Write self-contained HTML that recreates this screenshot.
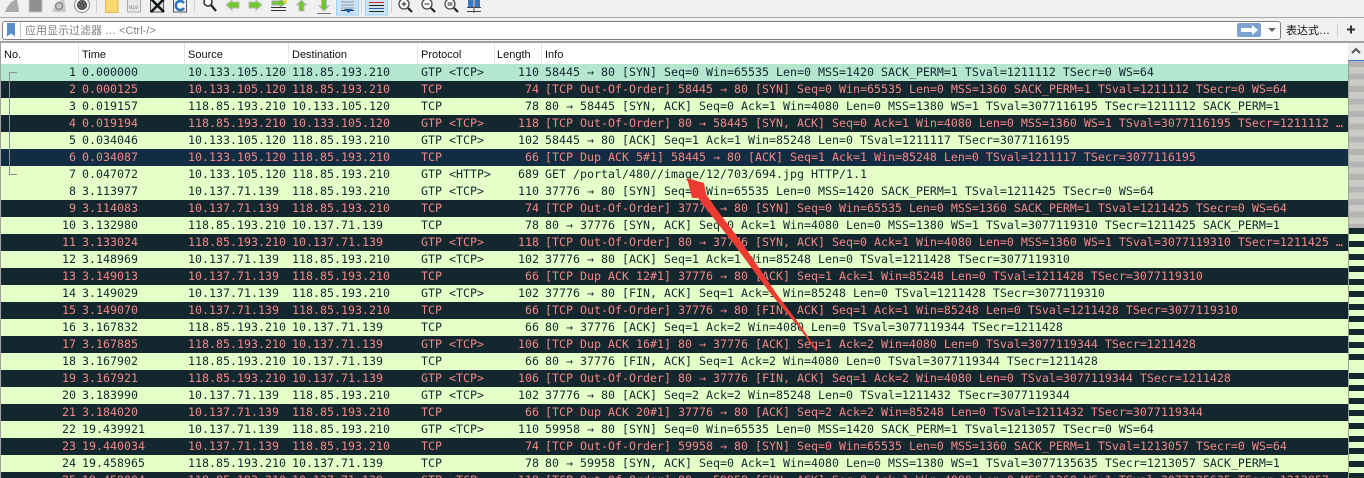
<!DOCTYPE html>
<html><head><meta charset="utf-8"><style>
html,body{margin:0;padding:0;width:1364px;height:478px;overflow:hidden;background:#f0f0f0}
body{position:relative;font-family:"Liberation Sans","Noto Sans CJK SC",sans-serif}
.abs{position:absolute}
#tb{position:absolute;left:0;top:0;width:1364px;height:18px;overflow:hidden}
#fbar{position:absolute;left:2px;top:21px;width:1277px;height:17px;background:#fff;border:1px solid #7d7d7d;border-radius:3px}
#hdr{position:absolute;left:1px;top:43px;width:1347px;height:21px;background:#fff;font-size:11px;color:#111}
#hdr span{position:absolute;top:6px;line-height:13px}
#hdr i{position:absolute;top:0;width:1px;height:21px;background:#e6e6e6}
#rows{position:absolute;left:1px;top:64px;width:1347px;height:414px;overflow:hidden;font-family:"DejaVu Sans Mono","Liberation Mono",monospace;font-size:11.63px;line-height:17px}
.r{position:absolute;left:0;width:1347px;height:17px;background:#e4ffc7;color:#12272e;white-space:pre}
.r span{position:absolute;top:0}
.k{background:#12272e;color:#f78787}
.b{background:#122d41;color:#f78787}
.g{background:#b5e6d0;color:#12272e}
.n{right:1272px}
.t{left:81px}
.s{left:187px}
.d{left:291px}
.p{left:420px}
.l{right:809px}
.i{left:544px}
</style></head><body>
<div id="tb">
<svg width="1364" height="18" viewBox="0 0 1364 18" style="position:absolute;left:0;top:0">
<path d="M5 12 C7 6 11 1 17 -1 L19 12Z" fill="#a9a9a9"/>
<rect x="29" y="-2" width="13" height="14" fill="#8f8f8f" stroke="#c4c4c4"/>
<path d="M52 12 C54 6 58 1 64 -1 L66 12Z" fill="#c9c9c9"/><circle cx="59" cy="6" r="3.5" fill="none" stroke="#8e8e8e" stroke-width="1.6"/>
<circle cx="82" cy="5" r="7.5" fill="#f4f4f4" stroke="#8a8a8a"/><circle cx="82" cy="5" r="5" fill="#444"/><circle cx="82" cy="5" r="3" fill="none" stroke="#aaa" stroke-dasharray="1.5 1.5"/><circle cx="82" cy="5" r="1.3" fill="#777"/>
<rect x="96" y="0" width="1" height="13" fill="#d0d0d0"/>
<path d="M105.500 -2H115L118 1V12.500H105.500Z" fill="#fbd973" stroke="#e6b84c"/>
<rect x="127.500" y="-2" width="13" height="14" fill="#e8e8e8" stroke="#aaa"/><text x="129" y="9" font-family="Liberation Mono" font-size="5" fill="#777">010</text>
<rect x="150.500" y="-2" width="13" height="14" fill="#dfe7df" stroke="#555"/><path d="M151 -1L164 12M164 -1L151 12" stroke="#111" stroke-width="2.500"/>
<rect x="173.500" y="-2" width="13" height="14" fill="#f0f5fa" stroke="#555"/><path d="M184 3A4.500 4.500 0 1 0 184 8" fill="none" stroke="#2a73c4" stroke-width="2.500"/>
<rect x="194" y="0" width="1" height="13" fill="#d0d0d0"/>
<circle cx="208" cy="2" r="4" fill="#fff" stroke="#333" stroke-width="1.500"/><path d="M211 5L216 11" stroke="#222" stroke-width="2.200"/>
<path d="M226 5L232 0V2H239V8H232V10Z" fill="#6fc72c" stroke="#bcbcbc"/>
<path d="M262 5L256 0V2H249V8H256V10Z" fill="#6fc72c" stroke="#bcbcbc"/>
<path d="M272 1H280V-1L286 3L280 7V5H272Z" fill="#6fc72c" stroke="#a9a9a9"/><path d="M271 7.500H286M271 10.500H286" stroke="#333"/><rect x="284" y="0" width="3" height="3" fill="#f0e030"/>
<path d="M301.500 0L306.500 5H304V11H299V5H296.500Z" fill="#6fc72c" stroke="#bcbcbc"/>
<path d="M324 11L329 6H326.500V-1H321.500V6H319Z" fill="#6fc72c" stroke="#bcbcbc"/><path d="M317 13.500H331" stroke="#777"/>
<rect x="336.500" y="-2" width="22" height="17" fill="#cce4f7" stroke="#99d1ff"/>
<path d="M341 2H354M341 5H354M341 8H354" stroke="#999"/><path d="M341 10.500H354" stroke="#333"/><path d="M344 9H353L348.500 13Z" fill="#1d5aa8"/>
<rect x="361" y="0" width="1" height="13" fill="#d0d0d0"/>
<rect x="365.500" y="-2" width="22" height="17" fill="#cce4f7" stroke="#99d1ff"/>
<path d="M369 2.500H384" stroke="#e02020"/><path d="M369 5.500H384" stroke="#222"/><path d="M369 8.500H384" stroke="#3050b0"/><path d="M369 11.500H384" stroke="#222"/>
<rect x="391" y="0" width="1" height="13" fill="#d0d0d0"/>
<circle cx="404" cy="4" r="5" fill="#fff" stroke="#444" stroke-width="1.300"/><path d="M401.500 4H406.500M404 1.500V6.500" stroke="#222"/><path d="M408 8L412 12" stroke="#222" stroke-width="2.200"/>
<circle cx="427" cy="4" r="5" fill="#fff" stroke="#444" stroke-width="1.300"/><path d="M424.500 4H429.500" stroke="#222"/><path d="M431 8L435 12" stroke="#222" stroke-width="2.200"/>
<circle cx="450" cy="4" r="5" fill="#fff" stroke="#444" stroke-width="1.300"/><path d="M447.500 3H452.500M447.500 5H452.500" stroke="#222"/><path d="M454 8L458 12" stroke="#222" stroke-width="2.200"/>
<path d="M467 11.500H481M467 7.500H481" stroke="#444"/><rect x="468" y="0" width="5" height="7" fill="#3a78c0"/><rect x="475" y="0" width="5" height="7" fill="#3a78c0"/><path d="M474 -1V13" stroke="#555"/>
</svg>
</div>
<div class="abs" style="left:0;top:17px;width:1364px;height:1px;background:#a8a8a8"></div>
<div id="fbar"></div>
<svg class="abs" style="left:0;top:18px" width="30" height="24"><path d="M7 5H15V18.500L11 15.500L7 18.500Z" fill="#5b8fc9"/><rect x="20" y="4" width="1" height="16" fill="#c4c4c4"/></svg>
<div class="abs" style="left:25px;top:25px;font-size:11px;line-height:13px;color:#808080;white-space:pre;font-family:'Liberation Sans','Noto Sans CJK SC',sans-serif">应用显示过滤器 … &lt;Ctrl-/&gt;</div>
<svg class="abs" style="left:1230px;top:20px" width="50" height="20"><rect x="7" y="3" width="24" height="14" rx="2" fill="#7ba3d0"/><path d="M11 8H22V5L28 10L22 15V12H11Z" fill="#fff"/><path d="M38 8H46L42 12Z" fill="#666"/></svg>
<div class="abs" style="left:1286px;top:25px;font-size:11px;line-height:13px;color:#111;white-space:pre">表达式…</div>
<div class="abs" style="left:1337px;top:23px;width:1px;height:14px;background:#cfcfcf"></div>
<svg class="abs" style="left:1346px;top:24px" width="12" height="12"><path d="M5 1.500V9.500M1 5.500H9" stroke="#333" stroke-width="2"/></svg>
<div class="abs" style="left:0;top:41px;width:1364px;height:2px;background:#a0a0a0"></div>
<div class="abs" style="left:0;top:43px;width:1px;height:435px;background:#a0a0a0"></div>
<div id="hdr">
<span style="left:3px">No.</span><i style="left:77px"></i>
<span style="left:81px">Time</span><i style="left:183px"></i>
<span style="left:187px">Source</span><i style="left:287px"></i>
<span style="left:291px">Destination</span><i style="left:416px"></i>
<span style="left:420px">Protocol</span><i style="left:493px"></i>
<span style="left:496px">Length</span><i style="left:540px"></i>
<span style="left:544px">Info</span>
</div>
<div id="rows">
<div class="r g" style="top:0"><span class="n">1</span><span class="t">0.000000</span><span class="s">10.133.105.120</span><span class="d">118.85.193.210</span><span class="p">GTP &lt;TCP&gt;</span><span class="l">110</span><span class="i">58445 → 80 [SYN] Seq=0 Win=65535 Len=0 MSS=1420 SACK_PERM=1 TSval=1211112 TSecr=0 WS=64</span></div>
<div class="r k" style="top:17px"><span class="n">2</span><span class="t">0.000125</span><span class="s">10.133.105.120</span><span class="d">118.85.193.210</span><span class="p">TCP</span><span class="l">74</span><span class="i">[TCP Out-Of-Order] 58445 → 80 [SYN] Seq=0 Win=65535 Len=0 MSS=1360 SACK_PERM=1 TSval=1211112 TSecr=0 WS=64</span></div>
<div class="r" style="top:34px"><span class="n">3</span><span class="t">0.019157</span><span class="s">118.85.193.210</span><span class="d">10.133.105.120</span><span class="p">TCP</span><span class="l">78</span><span class="i">80 → 58445 [SYN, ACK] Seq=0 Ack=1 Win=4080 Len=0 MSS=1380 WS=1 TSval=3077116195 TSecr=1211112 SACK_PERM=1</span></div>
<div class="r k" style="top:51px"><span class="n">4</span><span class="t">0.019194</span><span class="s">118.85.193.210</span><span class="d">10.133.105.120</span><span class="p">GTP &lt;TCP&gt;</span><span class="l">118</span><span class="i">[TCP Out-Of-Order] 80 → 58445 [SYN, ACK] Seq=0 Ack=1 Win=4080 Len=0 MSS=1360 WS=1 TSval=3077116195 TSecr=1211112 …</span></div>
<div class="r" style="top:68px"><span class="n">5</span><span class="t">0.034046</span><span class="s">10.133.105.120</span><span class="d">118.85.193.210</span><span class="p">GTP &lt;TCP&gt;</span><span class="l">102</span><span class="i">58445 → 80 [ACK] Seq=1 Ack=1 Win=85248 Len=0 TSval=1211117 TSecr=3077116195</span></div>
<div class="r b" style="top:85px"><span class="n">6</span><span class="t">0.034087</span><span class="s">10.133.105.120</span><span class="d">118.85.193.210</span><span class="p">TCP</span><span class="l">66</span><span class="i">[TCP Dup ACK 5#1] 58445 → 80 [ACK] Seq=1 Ack=1 Win=85248 Len=0 TSval=1211117 TSecr=3077116195</span></div>
<div class="r" style="top:102px"><span class="n">7</span><span class="t">0.047072</span><span class="s">10.133.105.120</span><span class="d">118.85.193.210</span><span class="p">GTP &lt;HTTP&gt;</span><span class="l">689</span><span class="i">GET /portal/480//image/12/703/694.jpg HTTP/1.1</span></div>
<div class="r" style="top:119px"><span class="n">8</span><span class="t">3.113977</span><span class="s">10.137.71.139</span><span class="d">118.85.193.210</span><span class="p">GTP &lt;TCP&gt;</span><span class="l">110</span><span class="i">37776 → 80 [SYN] Seq=0 Win=65535 Len=0 MSS=1420 SACK_PERM=1 TSval=1211425 TSecr=0 WS=64</span></div>
<div class="r k" style="top:136px"><span class="n">9</span><span class="t">3.114083</span><span class="s">10.137.71.139</span><span class="d">118.85.193.210</span><span class="p">TCP</span><span class="l">74</span><span class="i">[TCP Out-Of-Order] 37776 → 80 [SYN] Seq=0 Win=65535 Len=0 MSS=1360 SACK_PERM=1 TSval=1211425 TSecr=0 WS=64</span></div>
<div class="r" style="top:153px"><span class="n">10</span><span class="t">3.132980</span><span class="s">118.85.193.210</span><span class="d">10.137.71.139</span><span class="p">TCP</span><span class="l">78</span><span class="i">80 → 37776 [SYN, ACK] Seq=0 Ack=1 Win=4080 Len=0 MSS=1380 WS=1 TSval=3077119310 TSecr=1211425 SACK_PERM=1</span></div>
<div class="r k" style="top:170px"><span class="n">11</span><span class="t">3.133024</span><span class="s">118.85.193.210</span><span class="d">10.137.71.139</span><span class="p">GTP &lt;TCP&gt;</span><span class="l">118</span><span class="i">[TCP Out-Of-Order] 80 → 37776 [SYN, ACK] Seq=0 Ack=1 Win=4080 Len=0 MSS=1360 WS=1 TSval=3077119310 TSecr=1211425 …</span></div>
<div class="r" style="top:187px"><span class="n">12</span><span class="t">3.148969</span><span class="s">10.137.71.139</span><span class="d">118.85.193.210</span><span class="p">GTP &lt;TCP&gt;</span><span class="l">102</span><span class="i">37776 → 80 [ACK] Seq=1 Ack=1 Win=85248 Len=0 TSval=1211428 TSecr=3077119310</span></div>
<div class="r k" style="top:204px"><span class="n">13</span><span class="t">3.149013</span><span class="s">10.137.71.139</span><span class="d">118.85.193.210</span><span class="p">TCP</span><span class="l">66</span><span class="i">[TCP Dup ACK 12#1] 37776 → 80 [ACK] Seq=1 Ack=1 Win=85248 Len=0 TSval=1211428 TSecr=3077119310</span></div>
<div class="r" style="top:221px"><span class="n">14</span><span class="t">3.149029</span><span class="s">10.137.71.139</span><span class="d">118.85.193.210</span><span class="p">GTP &lt;TCP&gt;</span><span class="l">102</span><span class="i">37776 → 80 [FIN, ACK] Seq=1 Ack=1 Win=85248 Len=0 TSval=1211428 TSecr=3077119310</span></div>
<div class="r k" style="top:238px"><span class="n">15</span><span class="t">3.149070</span><span class="s">10.137.71.139</span><span class="d">118.85.193.210</span><span class="p">TCP</span><span class="l">66</span><span class="i">[TCP Out-Of-Order] 37776 → 80 [FIN, ACK] Seq=1 Ack=1 Win=85248 Len=0 TSval=1211428 TSecr=3077119310</span></div>
<div class="r" style="top:255px"><span class="n">16</span><span class="t">3.167832</span><span class="s">118.85.193.210</span><span class="d">10.137.71.139</span><span class="p">TCP</span><span class="l">66</span><span class="i">80 → 37776 [ACK] Seq=1 Ack=2 Win=4080 Len=0 TSval=3077119344 TSecr=1211428</span></div>
<div class="r k" style="top:272px"><span class="n">17</span><span class="t">3.167885</span><span class="s">118.85.193.210</span><span class="d">10.137.71.139</span><span class="p">GTP &lt;TCP&gt;</span><span class="l">106</span><span class="i">[TCP Dup ACK 16#1] 80 → 37776 [ACK] Seq=1 Ack=2 Win=4080 Len=0 TSval=3077119344 TSecr=1211428</span></div>
<div class="r" style="top:289px"><span class="n">18</span><span class="t">3.167902</span><span class="s">118.85.193.210</span><span class="d">10.137.71.139</span><span class="p">TCP</span><span class="l">66</span><span class="i">80 → 37776 [FIN, ACK] Seq=1 Ack=2 Win=4080 Len=0 TSval=3077119344 TSecr=1211428</span></div>
<div class="r k" style="top:306px"><span class="n">19</span><span class="t">3.167921</span><span class="s">118.85.193.210</span><span class="d">10.137.71.139</span><span class="p">GTP &lt;TCP&gt;</span><span class="l">106</span><span class="i">[TCP Out-Of-Order] 80 → 37776 [FIN, ACK] Seq=1 Ack=2 Win=4080 Len=0 TSval=3077119344 TSecr=1211428</span></div>
<div class="r" style="top:323px"><span class="n">20</span><span class="t">3.183990</span><span class="s">10.137.71.139</span><span class="d">118.85.193.210</span><span class="p">GTP &lt;TCP&gt;</span><span class="l">102</span><span class="i">37776 → 80 [ACK] Seq=2 Ack=2 Win=85248 Len=0 TSval=1211432 TSecr=3077119344</span></div>
<div class="r k" style="top:340px"><span class="n">21</span><span class="t">3.184020</span><span class="s">10.137.71.139</span><span class="d">118.85.193.210</span><span class="p">TCP</span><span class="l">66</span><span class="i">[TCP Dup ACK 20#1] 37776 → 80 [ACK] Seq=2 Ack=2 Win=85248 Len=0 TSval=1211432 TSecr=3077119344</span></div>
<div class="r" style="top:357px"><span class="n">22</span><span class="t">19.439921</span><span class="s">10.137.71.139</span><span class="d">118.85.193.210</span><span class="p">GTP &lt;TCP&gt;</span><span class="l">110</span><span class="i">59958 → 80 [SYN] Seq=0 Win=65535 Len=0 MSS=1420 SACK_PERM=1 TSval=1213057 TSecr=0 WS=64</span></div>
<div class="r k" style="top:374px"><span class="n">23</span><span class="t">19.440034</span><span class="s">10.137.71.139</span><span class="d">118.85.193.210</span><span class="p">TCP</span><span class="l">74</span><span class="i">[TCP Out-Of-Order] 59958 → 80 [SYN] Seq=0 Win=65535 Len=0 MSS=1360 SACK_PERM=1 TSval=1213057 TSecr=0 WS=64</span></div>
<div class="r" style="top:391px"><span class="n">24</span><span class="t">19.458965</span><span class="s">118.85.193.210</span><span class="d">10.137.71.139</span><span class="p">TCP</span><span class="l">78</span><span class="i">80 → 59958 [SYN, ACK] Seq=0 Ack=1 Win=4080 Len=0 MSS=1380 WS=1 TSval=3077135635 TSecr=1213057 SACK_PERM=1</span></div>
<div class="r k" style="top:408px"><span class="n">25</span><span class="t">19.459004</span><span class="s">118.85.193.210</span><span class="d">10.137.71.139</span><span class="p">GTP &lt;TCP&gt;</span><span class="l">118</span><span class="i">[TCP Out-Of-Order] 80 → 59958 [SYN, ACK] Seq=0 Ack=1 Win=4080 Len=0 MSS=1360 WS=1 TSval=3077135635 TSecr=1213057 …</span></div>
</div>
<svg class="abs" style="left:0;top:64px" width="30" height="120"><path d="M17 8.500H9.500V110.500H17" fill="none" stroke="#8a9099"/></svg>
<div class="abs" style="left:1348px;top:43px;width:16px;height:17px;background:#f0f0f0"></div>
<svg class="abs" style="left:1348px;top:43px" width="16" height="17"><path d="M4 10L8 6L12 10" fill="none" stroke="#555" stroke-width="2"/></svg>
<div class="abs" style="left:1348px;top:60px;width:16px;height:1px;background:#3a7bd5"></div>
<div class="abs" style="left:1348px;top:61px;width:16px;height:167px;background:repeating-linear-gradient(to bottom,#b4b4b4 0,#b4b4b4 6px,#cbcbc6 6px,#cbcbc6 12.55px)"></div>
<div class="abs" style="left:1348px;top:228px;width:16px;height:250px;background:#e4ffc7"></div>
<svg class="abs" style="left:1348px;top:228px" width="16" height="250" fill="#12272e">
<rect y="0" width="16" height="6"/><rect y="13" width="16" height="6"/><rect y="26" width="16" height="6"/><rect y="38" width="16" height="6"/><rect y="51" width="16" height="6"/><rect y="63" width="16" height="6"/><rect y="76" width="16" height="6"/><rect y="88" width="16" height="6"/><rect y="101" width="16" height="6"/><rect y="114" width="16" height="6"/><rect y="126" width="16" height="6"/>
<rect y="145" width="16" height="6"/><rect y="157" width="16" height="6"/><rect y="170" width="16" height="6"/><rect y="182" width="16" height="6"/><rect y="195" width="16" height="6"/><rect y="208" width="16" height="6"/><rect y="220" width="16" height="6"/><rect y="233" width="16" height="6"/><rect y="245" width="16" height="5"/>
</svg>
<div class="abs" style="left:1348px;top:61px;width:1px;height:417px;background:#9aa58c"></div>
<svg class="abs" style="left:0;top:0;pointer-events:none" width="1364" height="478"><polygon points="687,178 704,183 706,194 717,210 741.500,242 776,293 801.500,327 817,350 816,351 798.500,327 770,293 732.500,242 707,210 698,198 692,198" fill="#ec3b30"/></svg>
</body></html>
